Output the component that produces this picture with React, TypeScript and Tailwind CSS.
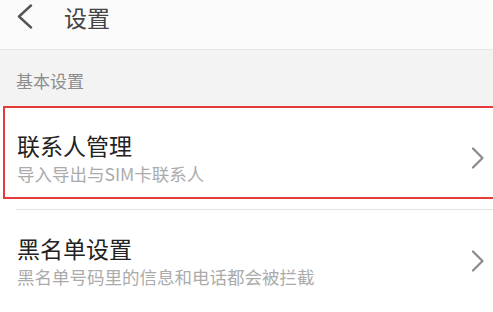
const FONT = "font-['Noto_Sans_CJK_SC','Noto_Sans',sans-serif]";

function ChevronRight() {
  return (
    <svg width="14" height="22" viewBox="0 0 14 22" fill="none" className="shrink-0">
      <path d="M2 1.5 L11.5 11 L2 20.5" stroke="#8a8a8a" strokeWidth="2.2" strokeLinecap="round" strokeLinejoin="round" />
    </svg>
  );
}

function Row({ title, sub, marked }: { title: string; sub: string; marked?: boolean }) {
  return (
    <div className="relative flex items-center justify-between bg-white pl-[17px] pr-[8px] pt-[23px] pb-[23px]">
      <div className="flex flex-col gap-[2px]">
        <div className="text-[23px] leading-[30px] text-[#222]">{title}</div>
        <div className="text-[17.5px] leading-[24px] text-[#ababab]">{sub}</div>
      </div>
      <ChevronRight />
      {marked && (
        <div className="absolute left-[3px] -top-px -right-[10px] h-[93px] border-[2.5px] border-[#e53b3b]" />
      )}
    </div>
  );
}

export default function App() {
  return (
    <div className={`${FONT} h-[312px] w-[493px] overflow-hidden bg-white`}>
      <header className="flex h-[50px] items-center border-b border-[#e6e6e6] bg-[#fbfbfb]">
        <svg width="18" height="26" viewBox="0 0 18 26" fill="none" className="ml-[16px] -mt-[16px]">
          <path d="M15 1.5 L3 12.5 L15 23.5" stroke="#555" strokeWidth="2.4" strokeLinecap="round" strokeLinejoin="round" />
        </svg>
        <span className="ml-[30px] -mt-[14px] text-[23px] text-[#444]">设置</span>
      </header>
      <div className="flex h-[57px] items-center bg-[#f3f3f3] pl-[16px]">
        <span className="mt-[4px] text-[17px] text-[#8c8c8c]">基本设置</span>
      </div>
      <Row title="联系人管理" sub="导入导出与SIM卡联系人" marked />
      <div className="ml-[16px] h-px bg-[#e4e4e4]" />
      <Row title="黑名单设置" sub="黑名单号码里的信息和电话都会被拦截" />
    </div>
  );
}
